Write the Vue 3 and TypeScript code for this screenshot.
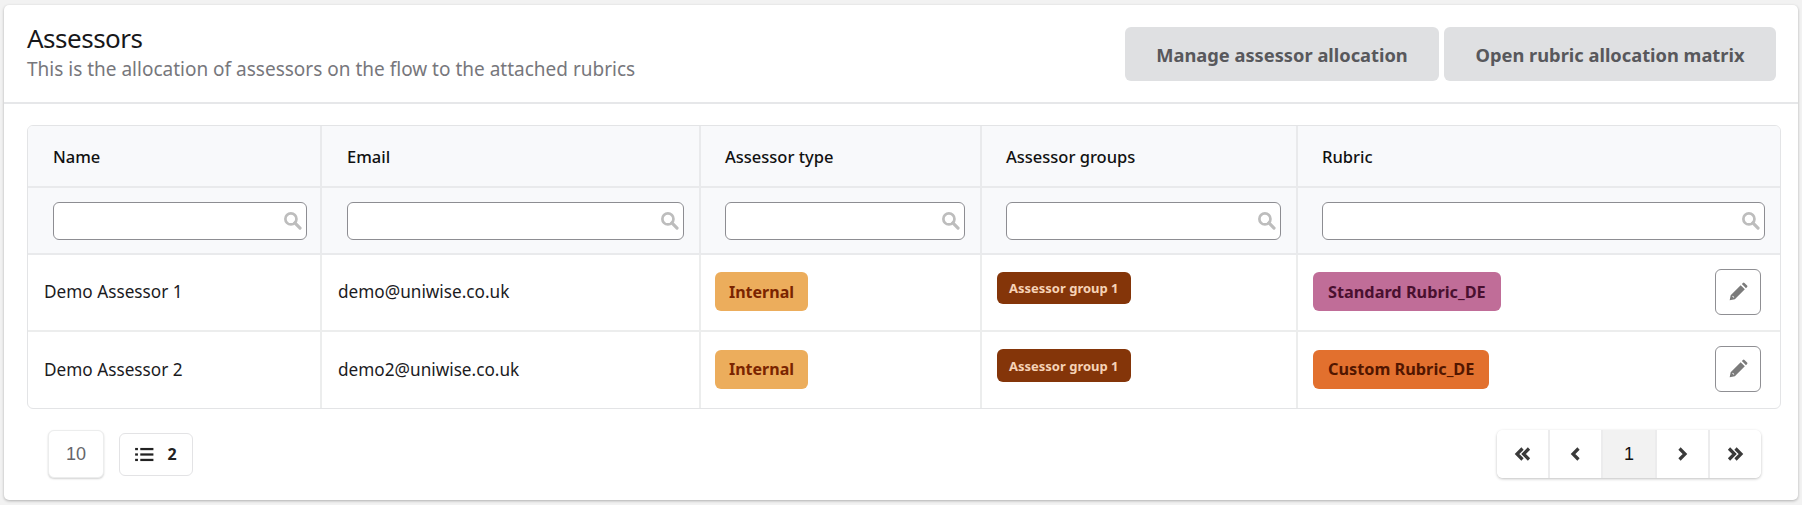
<script setup lang="ts">
interface Row { name: string; email: string; group: string; groupCls: string; rubric: string; rubricCls: string }
const rows: Row[] = [
  { name: 'Demo Assessor 1', email: 'demo@uniwise.co.uk', group: 'Assessor group 1', groupCls: 'g1', rubric: 'Standard Rubric_DE', rubricCls: 'pink' },
  { name: 'Demo Assessor 2', email: 'demo2@uniwise.co.uk', group: 'Assessor group 1', groupCls: 'g2', rubric: 'Custom Rubric_DE', rubricCls: 'orange' },
]
const cols = ['Name', 'Email', 'Assessor type', 'Assessor groups', 'Rubric']
</script>

<template>
  <div class="page">
    <section class="card">
      <header class="head">
        <div class="titles">
          <h1>Assessors</h1>
          <p>This is the allocation of assessors on the flow to the attached rubrics</p>
        </div>
        <div class="actions">
          <button class="act a1">Manage assessor allocation</button>
          <button class="act a2">Open rubric allocation matrix</button>
        </div>
      </header>
      <div class="body">
        <div class="tablewrap">
          <table>
            <colgroup>
              <col class="c1" /><col class="c2" /><col class="c3" /><col class="c4" /><col />
            </colgroup>
            <thead>
              <tr class="labels">
                <th v-for="c in cols" :key="c">{{ c }}</th>
              </tr>
              <tr class="filters">
                <th v-for="c in cols" :key="c">
                  <div class="search">
                    <input type="text" :aria-label="c" />
                    <svg viewBox="0 0 24 24" width="19" height="19" class="mag">
                      <circle cx="10" cy="10" r="7" fill="none" stroke="currentColor" stroke-width="3.4" />
                      <path d="M15 15l6.5 6.5" stroke="currentColor" stroke-width="4" stroke-linecap="round" />
                    </svg>
                  </div>
                </th>
              </tr>
            </thead>
            <tbody>
              <tr v-for="r in rows" :key="r.email">
                <td>{{ r.name }}</td>
                <td>{{ r.email }}</td>
                <td class="type"><span class="badge internal">Internal</span></td>
                <td class="top"><span class="badge group" :class="r.groupCls">{{ r.group }}</span></td>
                <td class="rub">
                  <div class="rubric">
                    <span class="badge" :class="r.rubricCls">{{ r.rubric }}</span>
                    <button class="edit" aria-label="Edit">
                      <svg viewBox="0 0 24 24" width="20" height="20">
                        <path fill="#7b7b7b" d="M2 22l1.2-6.2L15.2 3.8l5 5L8.2 20.800zM5 17.200l1.800 1.800 .8-.8-1.800-1.800zM16.600 2.400l1.300-1.300a1.300 1.300 0 0 1 1.900 0l3.100 3.100a1.300 1.300 0 0 1 0 1.900l-1.300 1.300z" fill-rule="evenodd" />
                      </svg>
                    </button>
                  </div>
                </td>
              </tr>
            </tbody>
          </table>
        </div>
        <footer class="foot">
          <div class="left">
            <button class="size">10</button>
            <div class="count">
              <svg viewBox="0 0 20 16" width="19" height="15">
                <g fill="#222">
                  <rect x="0" y="1" width="3" height="2.4" /><rect x="5.5" y="1" width="14" height="2.4" />
                  <rect x="0" y="6.8" width="3" height="2.4" /><rect x="5.5" y="6.8" width="14" height="2.4" />
                  <rect x="0" y="12.6" width="3" height="2.4" /><rect x="5.5" y="12.6" width="14" height="2.4" />
                </g>
              </svg>
              <b>2</b>
            </div>
          </div>
          <nav class="pager">
            <button aria-label="First"><svg viewBox="0 0 20 16" width="20" height="16"><path d="M9.500 2.500L4 8l5.500 5.500M16 2.500L10.500 8l5.500 5.500" /></svg></button>
            <button aria-label="Previous"><svg viewBox="0 0 20 16" width="20" height="16"><path d="M12.500 2.500L7 8l5.500 5.500" /></svg></button>
            <button class="cur">1</button>
            <button aria-label="Next"><svg viewBox="0 0 20 16" width="20" height="16"><path d="M7.500 2.500L13 8l-5.500 5.500" /></svg></button>
            <button aria-label="Last"><svg viewBox="0 0 20 16" width="20" height="16"><path d="M4 2.500L9.500 8 4 13.500M10.500 2.500L16 8l-5.500 5.500" /></svg></button>
          </nav>
        </footer>
      </div>
    </section>
  </div>
</template>

<style>
html, body { margin: 0; background: #f2f2f2; }
</style>

<style scoped>
.page {
  width: 1802px; height: 505px; box-sizing: border-box; padding: 5px 4px 5px 4px;
  font-family: "Noto Sans", sans-serif; color: #1d1d1f; overflow: hidden;
}
.card {
  background: #fff; border-radius: 5px; height: 495px; box-sizing: border-box;
  box-shadow: 0 1px 3px rgba(0,0,0,.28);
}
.head {
  height: 99px; box-sizing: border-box; border-bottom: 2px solid #e6e7e9;
  display: flex; justify-content: space-between; padding: 15px 22px 0 23px;
}
h1 { margin: 0; font-size: 26px; line-height: 36px; font-weight: 400; letter-spacing: -.5px; color: #17171a; }
.titles p { margin: 0; font-size: 19px; line-height: 26px; color: #77777c; }
.actions { display: flex; gap: 5px; margin-top: 7px; height: 54px; }
.act {
  height: 54px; border: 0; border-radius: 6px; background: #dfe0e2; color: #58585c;
  font: 700 18.3px "Noto Sans", sans-serif; padding: 0;
}
.a1 { width: 314px; }
.a2 { width: 332px; }
.body { padding: 21px 16px 0 23px; }
.tablewrap { border: 1px solid #e3e4e6; border-radius: 6px; overflow: hidden; width: 1754px; box-sizing: border-box; }
table { width: 100%; border-collapse: collapse; table-layout: fixed; font-size: 17.2px; }
.c1 { width: 293px; }
.c2 { width: 379px; }
.c3 { width: 281px; }
.c4 { width: 316px; }
thead { background: #f8f9fb; }
th { text-align: left; font-weight: 500; font-size: 16.5px; padding: 0 15px 0 25px; border-left: 2px solid #e9eaec; border-bottom: 2px solid #e9eaec; color: #111; }
th:first-child { padding-right: 13px; }
th:nth-child(n+3) { padding-left: 24px; }
th:first-child, td:first-child { border-left: 0; }
.labels th { height: 60px; }
.filters th { height: 65px; }
.search { position: relative; }
input {
  display: block; width: 100%; height: 38px; box-sizing: border-box; border: 1px solid #8d8d92;
  border-radius: 6px; background: #fff; outline: 0;
}
.mag { position: absolute; right: 5px; top: 9px; color: #bdbdbd; }
td { height: 77px; padding: 0 16px 2px; border-left: 2px solid #eceded; border-bottom: 2px solid #eceded; box-sizing: border-box; color: #1b1b1e; }
tbody tr:last-child td { border-bottom: 0; }
td.type { padding-left: 14px; }
td.rub { padding-left: 15px; }
.badge {
  display: inline-flex; align-items: center; height: 39px; padding: 0 15px; box-sizing: border-box;
  border-radius: 6px; font-weight: 700; font-size: 16.3px;
}
.internal { background: #ecad5c; color: #7a2400; font-size: 16px; padding: 0 14px; }
td.top { vertical-align: top; padding-top: 17px; padding-left: 15px; }
.group { background: #843509; color: #f6d2b6; font-size: 13px; padding: 0 12px; }
.g1 { height: 32px; }
.g2 { height: 33px; }
.pink { background: #c06d98; color: #49102f; }
.orange { background: #e2702e; color: #511600; }
.rubric { display: flex; align-items: center; justify-content: space-between; }
.edit {
  width: 46px; height: 46px; box-sizing: border-box; background: #fff; border: 1px solid #8f8f93;
  border-radius: 6px; display: flex; align-items: center; justify-content: center; padding: 0; margin-right: 3px;
}
.foot { display: flex; justify-content: space-between; align-items: center; padding: 21px 21px 0 21px; }
.left { display: flex; align-items: center; gap: 15px; }
.size {
  width: 56px; height: 48px; background: #fff; border: 1px solid #eceded; border-radius: 6px;
  box-shadow: 0 1px 2px rgba(0,0,0,.18); font: 400 18px "Liberation Sans", sans-serif; color: #66666a; padding: 0;
}
.count {
  width: 74px; height: 43px; box-sizing: border-box; border: 1px solid #e3e3e5; border-radius: 6px;
  display: flex; align-items: center; justify-content: center; gap: 13px; font-size: 16px; color: #222;
}
.pager {
  display: flex; width: 264px; height: 48px; background: #fff; border-radius: 6px; overflow: hidden;
  box-shadow: 0 1px 3px rgba(0,0,0,.25);
}
.pager button {
  flex: 1; border: 0; border-left: 2px solid #ececed; background: #fff; padding: 0; font: 400 18px "Liberation Sans", sans-serif; color: #111;
  display: flex; align-items: center; justify-content: center;
}
.pager button:first-child { border-left: 0; }
.pager .cur { background: #f2f2f2; }
.pager svg path { fill: none; stroke: #3a3a3a; stroke-width: 3.2; }
</style>
